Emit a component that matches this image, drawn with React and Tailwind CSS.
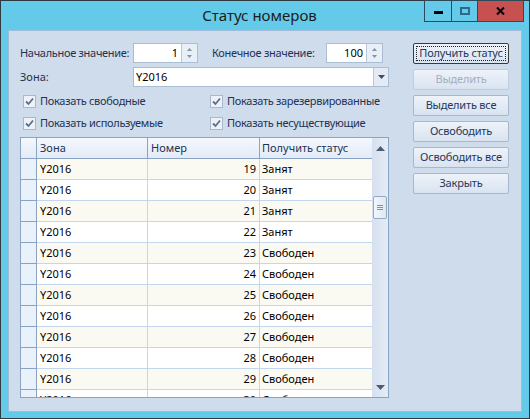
import React from 'react';

const rows = [
  [19, 'Занят'], [20, 'Занят'], [21, 'Занят'], [22, 'Занят'],
  [23, 'Свободен'], [24, 'Свободен'], [25, 'Свободен'], [26, 'Свободен'],
  [27, 'Свободен'], [28, 'Свободен'], [29, 'Свободен'], [30, 'Свободен'],
];

function Spinner() {
  return (
    <div className="w-[16px] h-full border-l border-[#b9c8da] bg-[#e9eff7] flex flex-col items-center justify-center gap-[4px]">
      <svg width="5" height="3" viewBox="0 0 5 3"><path d="M0 3 L2.5 0 L5 3 Z" fill="#8593a6" /></svg>
      <svg width="5" height="3" viewBox="0 0 5 3"><path d="M0 0 L2.5 3 L5 0 Z" fill="#8593a6" /></svg>
    </div>
  );
}

function NumInput({ value, width }) {
  return (
    <div className={`${width} h-[20px] bg-white border border-[#abbdd3] flex`}>
      <div className="flex-1 text-right pr-[3px] leading-[18px] text-black">{value}</div>
      <Spinner />
    </div>
  );
}

function Check({ label }) {
  return (
    <div className="flex items-center gap-[4px] whitespace-nowrap">
      <div className="ml-[3px] w-[13px] h-[13px] border border-[#a9b8ca] bg-[#eef2f8] flex items-center justify-center">
        <svg width="9" height="9" viewBox="0 0 9 9">
          <path d="M1 4.5 L3.5 7 L8 1.5" stroke="#5b6f8e" strokeWidth="1.8" fill="none" />
        </svg>
      </div>
      <span className="tracking-[-0.3px]">{label}</span>
    </div>
  );
}

function Btn({ children, disabled, primary }) {
  return (
    <div
      className={
        'h-[21px] rounded-[2px] border bg-gradient-to-b from-[#eef3fa] to-[#d9e3f0] flex items-center justify-center whitespace-nowrap tracking-[-0.2px] ' +
        (primary ? 'border-[#3b3b3b] p-[2px]' : disabled ? 'border-[#bfcddd]' : 'border-[#a7b8cd]')
      }
    >
      {primary ? (
        <div className="w-full h-full border border-dotted border-[#222] flex items-center justify-center text-[#1e395b]">
          {children}
        </div>
      ) : (
        <span className={disabled ? 'text-[#a3aebd]' : 'text-[#1e395b]'}>{children}</span>
      )}
    </div>
  );
}

export default function App() {
  return (
    <div className="w-[530px] h-[419px] bg-[#63cbe9] border border-[#2e3a40] flex flex-col font-['Noto_Sans',sans-serif] text-[11px]">
      <div className="h-[29px] flex items-start">
        <div className="w-[100px]" />
        <div className="flex-1 text-center text-[15px] leading-[29px] text-[#1b1b1b] pr-[6px]">Статус номеров</div>
        <div className="mt-[-1px] mr-[5px] h-[22px] flex border border-[#2d4a58]">
          <div className="w-[27px] flex items-center justify-center border-r border-[#2d4a58]">
            <div className="w-[9px] h-[3px] bg-black mt-[3px]" />
          </div>
          <div className="w-[26px] flex items-center justify-center border-r border-[#2d4a58]">
            <div className="w-[10px] h-[8px] border-[2px] border-[#2c6a88] mb-[1px]" />
          </div>
          <div className="w-[45px] bg-[#c75050] flex items-center justify-center">
            <svg width="9" height="8" viewBox="0 0 9 8">
              <path d="M1 0.5 L8 7.5 M8 0.5 L1 7.5" stroke="#000" strokeWidth="2" />
            </svg>
          </div>
        </div>
      </div>

      <div className="mx-[7px] mb-[6px] flex-1 bg-[#cfdcec] border border-[#9fbcd8] flex pl-[11px] pt-[12px] text-[#1e3352] whitespace-nowrap">
        <div className="w-[369px] flex flex-col">
          <div className="h-[20px] flex items-center">
            <span className="w-[113px] tracking-[-0.3px]">Начальное значение:</span>
            <NumInput value="1" width="w-[65px]" />
            <span className="ml-[14px] w-[114px] tracking-[-0.3px]">Конечное значение:</span>
            <NumInput value="100" width="w-[57px]" />
          </div>
          <div className="mt-[4px] h-[20px] flex items-center">
            <span className="w-[113px]">Зона:</span>
            <div className="w-[256px] h-[20px] bg-white border border-[#abbdd3] flex">
              <div className="flex-1 pl-[2px] leading-[18px] text-black">Y2016</div>
              <div className="w-[15px] border-l border-[#b9c8da] bg-[#e4ebf5] flex items-center justify-center">
                <svg width="7" height="4" viewBox="0 0 7 4"><path d="M0 0 L3.5 4 L7 0 Z" fill="#3f4d63" /></svg>
              </div>
            </div>
          </div>
          <div className="h-[22px] mt-[3px] grid grid-cols-[187px_1fr] items-center">
            <Check label="Показать свободные" />
            <Check label="Показать зарезервированные" />
          </div>
          <div className="h-[22px] grid grid-cols-[187px_1fr] items-center">
            <Check label="Показать используемые" />
            <Check label="Показать несуществующие" />
          </div>

          <div className="mt-[3px] h-[261px] border border-[#8aa3c3] bg-white flex overflow-hidden text-black">
            <div className="flex-1 flex flex-col">
              <div className="h-[21px] shrink-0 flex border-b border-[#8aa3c3] bg-gradient-to-b from-[#f5f8fd] to-[#e2ebf7] text-[#1e3352]">
                <div className="w-[16px] border-r border-[#8aa3c3]" />
                <div className="w-[111px] border-r border-[#8aa3c3] pl-[3px] leading-[20px]">Зона</div>
                <div className="w-[112px] border-r border-[#8aa3c3] pl-[3px] leading-[20px]">Номер</div>
                <div className="flex-1 pl-[2px] leading-[20px]">Получить статус</div>
              </div>
              {rows.map(([n, s], i) => (
                <div
                  key={n}
                  className={'h-[21px] shrink-0 flex ' + (i % 2 === 0 ? 'bg-[#fafaf2]' : 'bg-white')}
                >
                  <div className="w-[16px] bg-[#e9f1fb] border-r border-b border-[#8aa3c3]" />
                  <div className="w-[111px] border-r border-b border-[#c2d6ee] pl-[3px] leading-[20px]">Y2016</div>
                  <div className="w-[112px] border-r border-b border-[#c2d6ee] pr-[3px] text-right leading-[20px]">{n}</div>
                  <div className="flex-1 border-b border-[#c2d6ee] pl-[2px] leading-[20px]">{s}</div>
                </div>
              ))}
            </div>
            <div className="w-[16px] bg-gradient-to-r from-[#d6e1ef] to-[#e4ecf6] flex flex-col items-center">
              <svg className="mt-[8px]" width="9" height="5" viewBox="0 0 9 5"><path d="M0 5 L4.5 0 L9 5 Z" fill="#4e5b70" /></svg>
              <div className="mt-[45px] w-[14px] h-[23px] rounded-[2px] border border-[#93a9c6] bg-gradient-to-r from-[#f4f7fb] to-[#dfe7f2] flex flex-col items-center justify-center gap-[1px]">
                <div className="w-[6px] h-[1px] bg-[#7f8fa6]" />
                <div className="w-[6px] h-[1px] bg-[#7f8fa6]" />
                <div className="w-[6px] h-[1px] bg-[#7f8fa6]" />
              </div>
              <div className="flex-1" />
              <svg className="mb-[7px]" width="9" height="5" viewBox="0 0 9 5"><path d="M0 0 L4.5 5 L9 0 Z" fill="#4e5b70" /></svg>
            </div>
          </div>
        </div>

        <div className="ml-[24px] w-[96px] flex flex-col gap-[5px]">
          <Btn primary>Получить статус</Btn>
          <Btn disabled>Выделить</Btn>
          <Btn>Выделить все</Btn>
          <Btn>Освободить</Btn>
          <Btn>Освободить все</Btn>
          <Btn>Закрыть</Btn>
        </div>
      </div>
    </div>
  );
}
